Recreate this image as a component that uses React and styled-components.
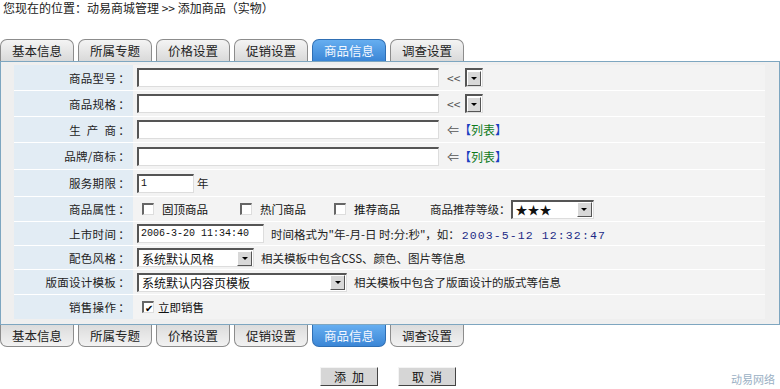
import React from "react";
import styled, { createGlobalStyle, css } from "styled-components";

const Global = createGlobalStyle`
  html, body { margin: 0; padding: 0; background: #fff; }
  body { font-family: "Noto Sans CJK SC", "Liberation Sans", sans-serif; font-size: 11.5px; color: #111; }
  * { box-sizing: border-box; }
`;

const Page = styled.div`
  width: 780px;
  height: 389px;
  position: relative;
  overflow: hidden;
`;

const Crumb = styled.div`
  height: 16px;
  padding: 0 3px;
  line-height: 16px;
  font-size: 12px;
  color: #222;
  margin-bottom: 23px;
`;

const TabRow = styled.div`
  display: flex;
  gap: 4px;
  height: 22px;
  align-items: stretch;
`;

const Tab = styled.div`
  width: 74px;
  display: flex;
  align-items: center;
  justify-content: center;
  font-size: 12.5px;
  color: #222;
  border: 1px solid #8c8c8c;
  background: linear-gradient(#f4f4f4, #d9d9d9);
  ${(p) =>
    p.$bottom
      ? css`
          border-top: none;
          border-radius: 0 0 7px 7px;
          background: linear-gradient(#dcdcdc, #f2f2f2);
        `
      : css`
          border-bottom: none;
          border-radius: 7px 7px 0 0;
        `}
  ${(p) =>
    p.$active &&
    css`
      background: linear-gradient(#66aef0, #3b86d6);
      border-color: #2f6fb4;
      color: #f4f8ff;
    `}
`;

const Panel = styled.div`
  border: 1px solid #7ea6c0;
  background: #efefef;
  padding: 3px 14px 5px 13px;
`;

const Table = styled.div`
  display: grid;
  grid-template-columns: 119px 1fr;
  background: #fff;
  row-gap: 1px;
`;

const Label = styled.div`
  background: #e2ecf4;
  height: ${(p) => p.$h}px;
  display: flex;
  align-items: center;
  justify-content: flex-end;
  padding-right: 3px;
  color: #222;
  font-size: 11.5px;
  letter-spacing: 0.3px;
`;

const Colon = styled.span`
  margin-left: 2px;
`;

const Cell = styled.div`
  background: #f3f3f3;
  height: ${(p) => p.$h}px;
  display: flex;
  align-items: center;
  padding-left: 4px;
`;

const TextInput = styled.div`
  width: ${(p) => p.$w}px;
  height: 19px;
  background: #fff;
  border-top: 2px solid #555;
  border-left: 2px solid #555;
  border-right: 1px solid #ddd;
  border-bottom: 1px solid #ddd;
  font-family: "Liberation Mono", "DejaVu Sans Mono", monospace;
  font-size: 10px;
  line-height: 16px;
  padding-left: 2px;
  color: #111;
  white-space: nowrap;
  overflow: hidden;
`;

const Arrow = styled.span`
  margin-left: 8px;
  color: #555;
  font-size: 12px;
`;

const Link = styled.span`
  color: #1a40c0;
  b {
    font-weight: normal;
    color: #0f7a1c;
  }
`;

const SelectBox = styled.div`
  width: ${(p) => p.$w}px;
  height: 19px;
  background: #fff;
  border-top: 2px solid #555;
  border-left: 2px solid #555;
  border-right: 1px solid #ddd;
  border-bottom: 1px solid #ddd;
  display: flex;
  align-items: center;
  margin-left: ${(p) => p.$ml || 0}px;
  font-size: 12px;
  color: #111;
`;

const SelText = styled.span`
  flex: 1;
  padding-left: 3px;
  white-space: nowrap;
  overflow: hidden;
`;

const DropBtn = styled.span`
  width: 15px;
  height: 15px;
  margin-right: 1px;
  background: #d8d8d8;
  border: 1px solid;
  border-color: #fff #555 #555 #fff;
  display: flex;
  align-items: center;
  justify-content: center;
  &::after {
    content: "";
    border-left: 3px solid transparent;
    border-right: 3px solid transparent;
    border-top: 3px solid #000;
  }
`;

const Note = styled.span`
  margin-left: ${(p) => p.$ml || 7}px;
  color: #222;
  white-space: nowrap;
`;

const Mono = styled.span`
  font-family: "Liberation Mono", "DejaVu Sans Mono", monospace;
  font-size: 11.5px;
  letter-spacing: 1.1px;
  color: #1c2a86;
  margin-left: 2px;
`;

const Check = styled.span`
  width: 12px;
  height: 12px;
  background: #fff;
  border-top: 2px solid #666;
  border-left: 2px solid #666;
  border-right: 1px solid #ddd;
  border-bottom: 1px solid #ddd;
  margin-left: ${(p) => p.$ml || 0}px;
  margin-right: ${(p) => p.$mr || 8}px;
  display: inline-flex;
  align-items: center;
  justify-content: center;
  font-size: 10px;
  line-height: 1;
  color: #000;
`;

const Buttons = styled.div`
  display: flex;
  gap: 20px;
  padding-left: 320px;
  margin-top: 20px;
`;

const Btn = styled.div`
  width: 58px;
  height: 19px;
  background: #d6d6d6;
  border: 1px solid;
  border-color: #f4f4f4 #444 #444 #f4f4f4;
  display: flex;
  align-items: center;
  justify-content: center;
  font-size: 12px;
  letter-spacing: 6px;
  padding-left: 6px;
  color: #111;
`;

const Watermark = styled.div`
  position: absolute;
  right: 5px;
  bottom: 2px;
  color: #9ab0c4;
  font-size: 11px;
`;

const tabs = ["基本信息", "所属专题", "价格设置", "促销设置", "商品信息", "调查设置"];

function Tabs({ bottom }) {
  return (
    <TabRow>
      {tabs.map((t, i) => (
        <Tab key={t} $active={i === 4} $bottom={bottom}>
          {t}
        </Tab>
      ))}
    </TabRow>
  );
}

function L({ h, children }) {
  return (
    <Label $h={h}>
      {children}
      <Colon>：</Colon>
    </Label>
  );
}

export default function App() {
  return (
    <Page>
      <Global />
      <Crumb>您现在的位置：动易商城管理 &gt;&gt; 添加商品（实物）</Crumb>
      <Tabs />
      <Panel>
        <Table>
          <L h={25}>商品型号</L>
          <Cell $h={25}>
            <TextInput $w={302} />
            <Arrow>&lt;&lt;</Arrow>
            <SelectBox $w={18} $ml={5}>
              <DropBtn />
            </SelectBox>
          </Cell>
          <L h={25}>商品规格</L>
          <Cell $h={25}>
            <TextInput $w={302} />
            <Arrow>&lt;&lt;</Arrow>
            <SelectBox $w={18} $ml={5}>
              <DropBtn />
            </SelectBox>
          </Cell>
          <L h={25}>生&nbsp;&nbsp;产&nbsp;&nbsp;商</L>
          <Cell $h={25}>
            <TextInput $w={302} />
            <Arrow>
              ⇐<Link>【<b>列表</b>】</Link>
            </Arrow>
          </Cell>
          <L h={26}>品牌/商标</L>
          <Cell $h={26}>
            <TextInput $w={302} />
            <Arrow>
              ⇐<Link>【<b>列表</b>】</Link>
            </Arrow>
          </Cell>
          <L h={26}>服务期限</L>
          <Cell $h={26}>
            <TextInput $w={57}>1</TextInput>
            <Note $ml={3}>年</Note>
          </Cell>
          <L h={24}>商品属性</L>
          <Cell $h={24}>
            <Check $ml={5}></Check>
            <span>固顶商品</span>
            <Check $ml={32}></Check>
            <span>热门商品</span>
            <Check $ml={28}></Check>
            <span>推荐商品</span>
            <Note $ml={30}>商品推荐等级：</Note>
            <SelectBox $w={83}>
              <SelText>★★★</SelText>
              <DropBtn />
            </SelectBox>
          </Cell>
          <L h={23}>上市时间</L>
          <Cell $h={23}>
            <TextInput $w={127}>2006-3-20 11:34:40</TextInput>
            <Note>
              时间格式为"年-月-日 时:分:秒"，如：<Mono>2003-5-12 12:32:47</Mono>
            </Note>
          </Cell>
          <L h={23}>配色风格</L>
          <Cell $h={23}>
            <SelectBox $w={117}>
              <SelText>系统默认风格</SelText>
              <DropBtn />
            </SelectBox>
            <Note>相关模板中包含CSS、颜色、图片等信息</Note>
          </Cell>
          <L h={24}>版面设计模板</L>
          <Cell $h={24}>
            <SelectBox $w={210}>
              <SelText>系统默认内容页模板</SelText>
              <DropBtn />
            </SelectBox>
            <Note>相关模板中包含了版面设计的版式等信息</Note>
          </Cell>
          <L h={24}>销售操作</L>
          <Cell $h={24}>
            <Check $ml={5} $mr={4}>✔</Check>
            <span>立即销售</span>
          </Cell>
        </Table>
      </Panel>
      <Tabs bottom />
      <Buttons>
        <Btn>添加</Btn>
        <Btn>取消</Btn>
      </Buttons>
      <Watermark>动易网络</Watermark>
    </Page>
  );
}
